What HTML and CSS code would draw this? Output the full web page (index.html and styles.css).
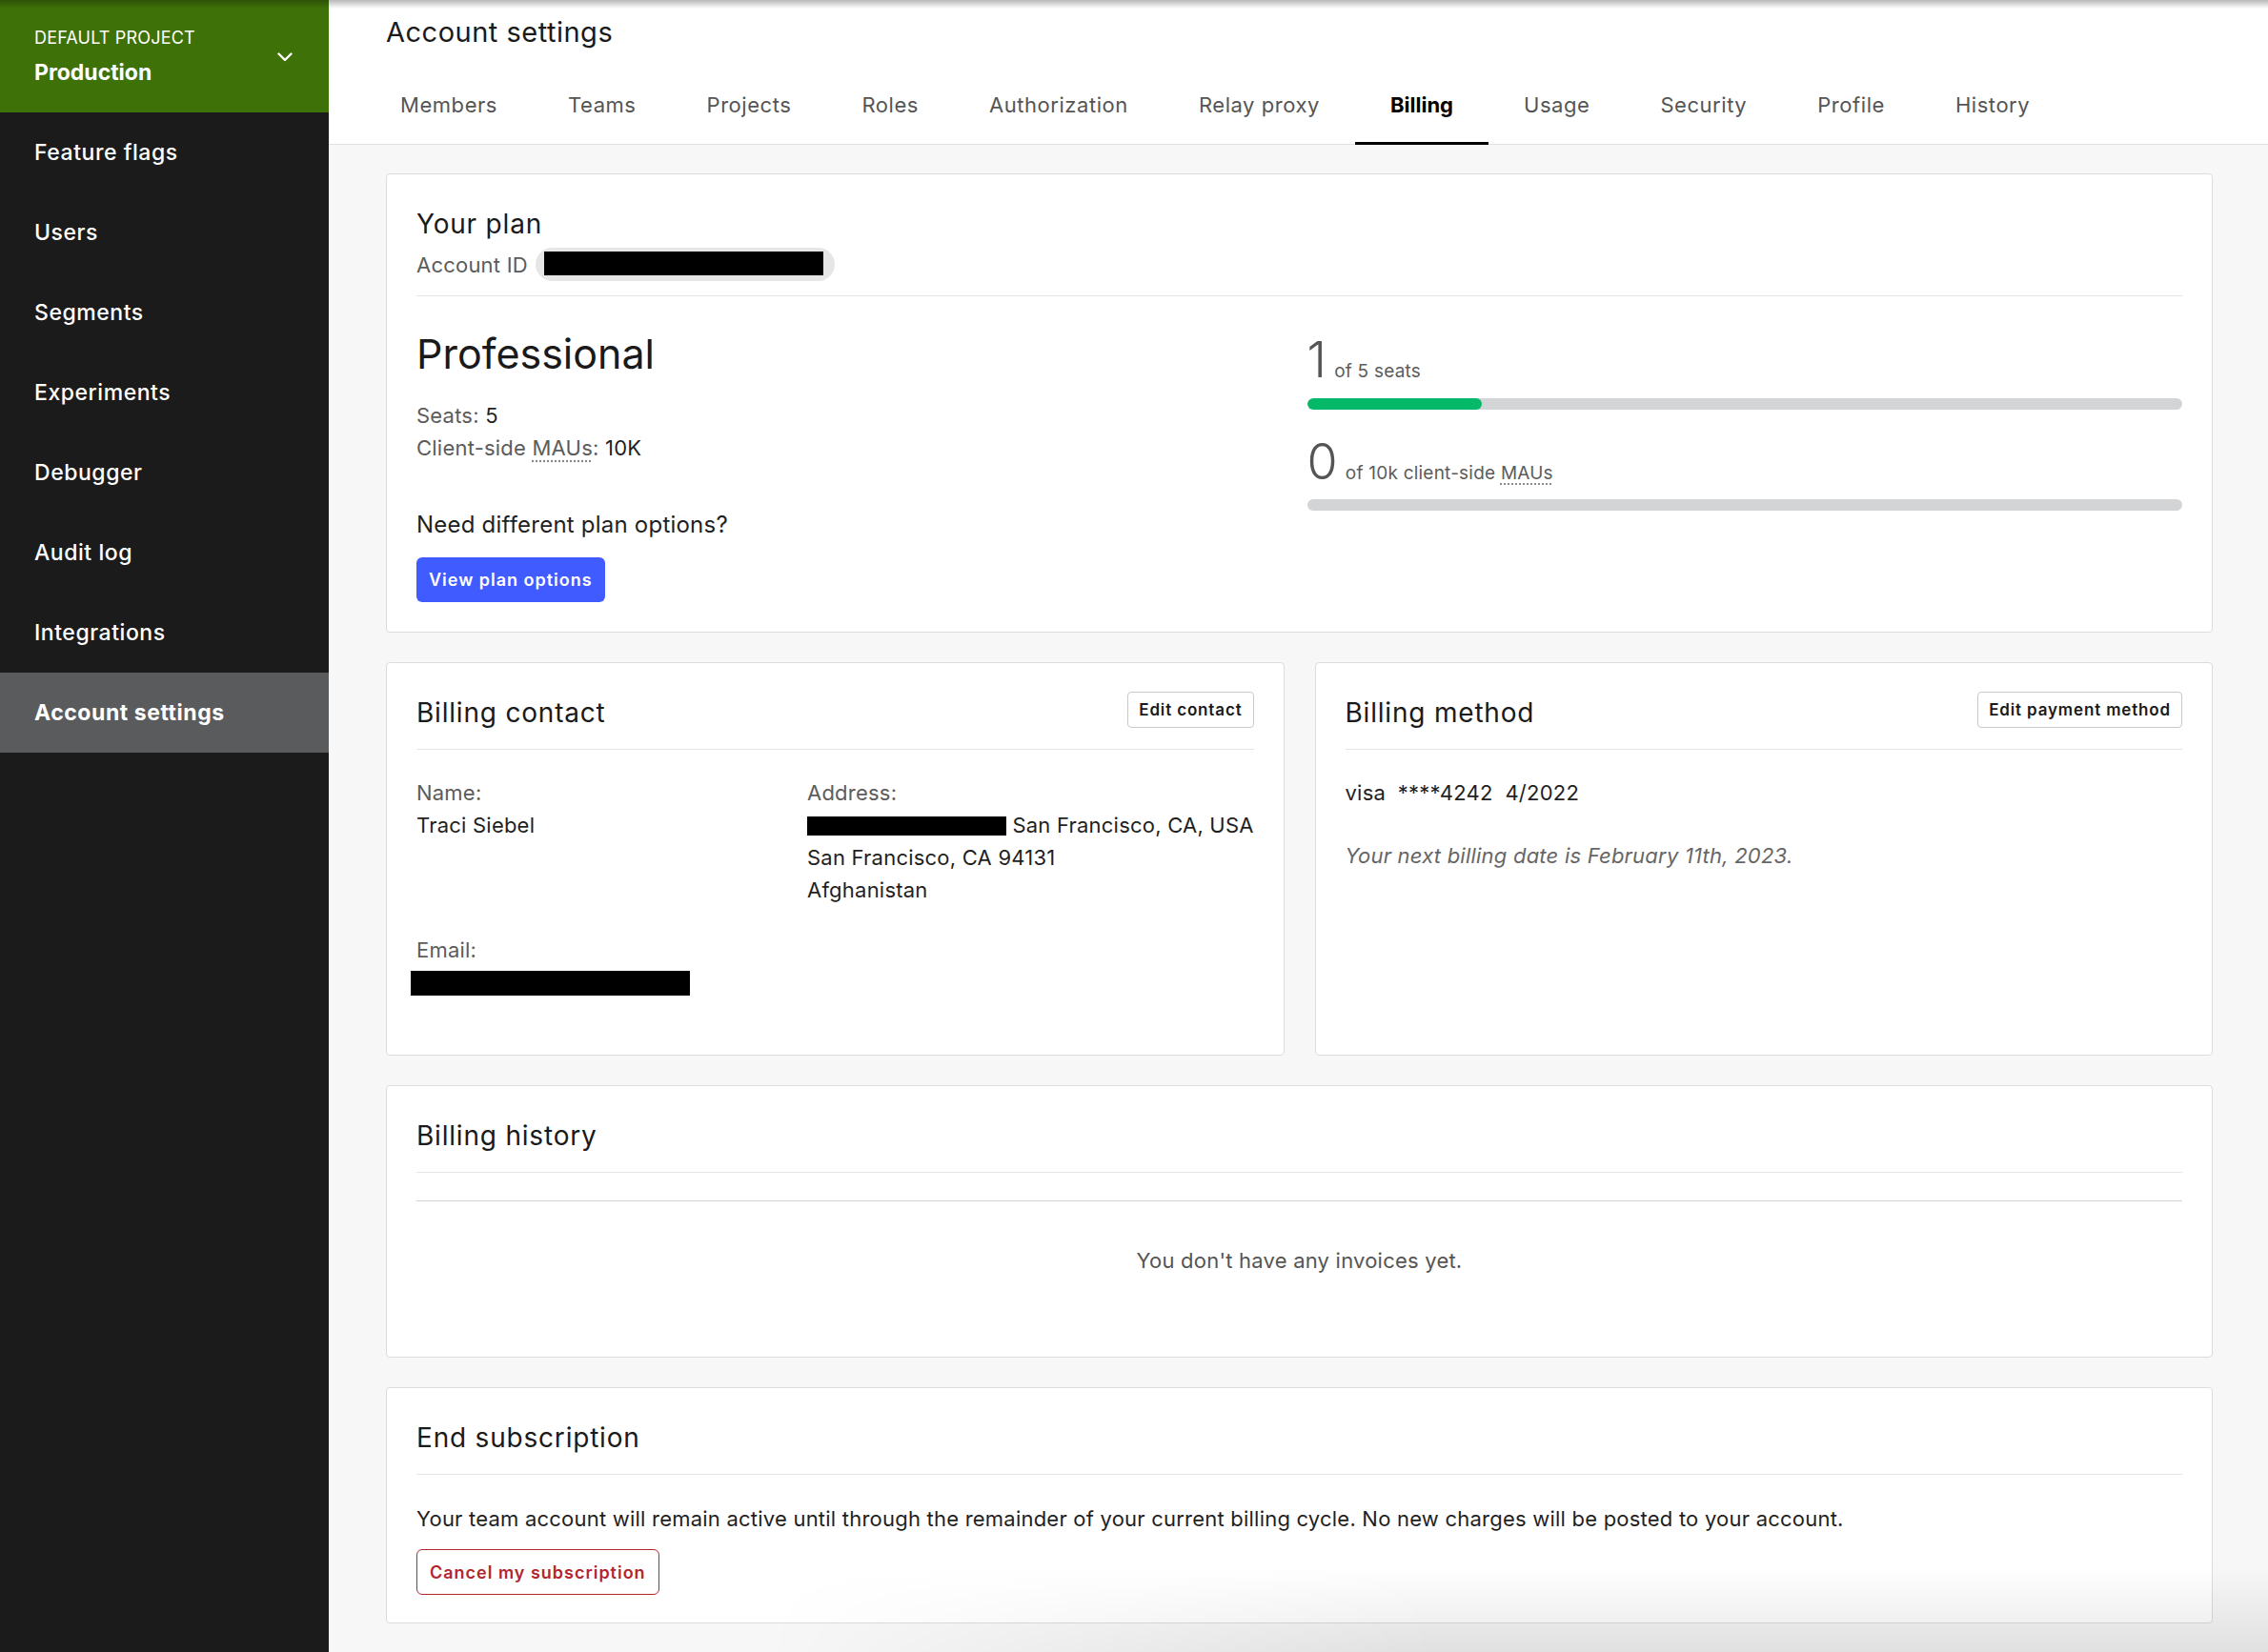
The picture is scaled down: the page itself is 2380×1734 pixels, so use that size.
FILE: index.html
```html
<!DOCTYPE html>
<html lang="en">
<head>
<meta charset="utf-8">
<title>Account settings – Billing</title>
<link rel="stylesheet" href="styles.css">
</head>
<body>
<div class="app">
  <aside class="sidebar">
    <div class="project">
      <div class="project-text">
        <div class="project-label">DEFAULT PROJECT</div>
        <div class="project-name">Production</div>
      </div>
      <svg class="chevron" width="16" height="10" viewBox="0 0 16 10" aria-hidden="true"><path d="M1.5 1.5 L8 8 L14.5 1.5" fill="none" stroke="#fff" stroke-width="2.4" stroke-linecap="round" stroke-linejoin="round"/></svg>
    </div>
    <nav class="nav">
      <a class="nav-item">Feature flags</a>
      <a class="nav-item">Users</a>
      <a class="nav-item">Segments</a>
      <a class="nav-item">Experiments</a>
      <a class="nav-item">Debugger</a>
      <a class="nav-item">Audit log</a>
      <a class="nav-item">Integrations</a>
      <a class="nav-item is-active">Account settings</a>
    </nav>
  </aside>

  <main class="main">
    <header class="page-header">
      <h1 class="page-title">Account settings</h1>
      <nav class="tabs">
        <a class="tab">Members</a>
        <a class="tab">Teams</a>
        <a class="tab">Projects</a>
        <a class="tab">Roles</a>
        <a class="tab">Authorization</a>
        <a class="tab">Relay proxy</a>
        <a class="tab is-active">Billing</a>
        <a class="tab">Usage</a>
        <a class="tab">Security</a>
        <a class="tab">Profile</a>
        <a class="tab">History</a>
      </nav>
    </header>

    <div class="content">
      <section class="card">
        <div class="card-header plan-header">
          <h2 class="card-title">Your plan</h2>
          <div class="account-id">
            <span class="muted">Account ID</span>
            <span class="pill"><span class="redact redact-id"></span></span>
          </div>
        </div>
        <div class="plan-body">
          <div class="plan-info">
            <h3 class="plan-name">Professional</h3>
            <p class="line"><span class="muted">Seats:</span> 5</p>
            <p class="line"><span class="muted">Client-side <abbr class="abbr">MAUs</abbr>:</span> 10K</p>
            <p class="plan-question">Need different plan options?</p>
            <button class="btn btn-primary">View plan options</button>
          </div>
          <div class="usage">
            <div class="usage-row">
              <span class="usage-num">1</span>
              <span class="usage-text">of 5 seats</span>
            </div>
            <div class="bar"><div class="bar-fill" style="width: 20%"></div></div>
            <div class="usage-row usage-row-second">
              <span class="usage-num">0</span>
              <span class="usage-text">of 10k client-side <abbr class="abbr">MAUs</abbr></span>
            </div>
            <div class="bar bar-second"></div>
          </div>
        </div>
      </section>

      <div class="card-pair">
        <section class="card">
          <div class="card-header">
            <h2 class="card-title">Billing contact</h2>
            <button class="btn btn-small">Edit contact</button>
          </div>
          <div class="card-body contact-body">
            <div class="field">
              <div class="muted">Name:</div>
              <div>Traci Siebel</div>
            </div>
            <div class="field">
              <div class="muted">Address:</div>
              <div><span class="redact redact-street"></span> San Francisco, CA, USA</div>
              <div>San Francisco, CA 94131</div>
              <div>Afghanistan</div>
            </div>
            <div class="field">
              <div class="muted">Email:</div>
              <div><span class="redact redact-email"></span></div>
            </div>
          </div>
        </section>

        <section class="card">
          <div class="card-header">
            <h2 class="card-title">Billing method</h2>
            <button class="btn btn-small">Edit payment method</button>
          </div>
          <div class="card-body method-body">
            <p class="line">visa&nbsp;&nbsp;****4242&nbsp;&nbsp;4/2022</p>
            <p class="next-date">Your next billing date is February 11th, 2023.</p>
          </div>
        </section>
      </div>

      <section class="card">
        <div class="card-header">
          <h2 class="card-title">Billing history</h2>
        </div>
        <div class="table-head"></div>
        <p class="empty">You don't have any invoices yet.</p>
      </section>

      <section class="card">
        <div class="card-header">
          <h2 class="card-title">End subscription</h2>
        </div>
        <div class="card-body end-body">
          <p class="line">Your team account will remain active until through the remainder of your current billing cycle. No new charges will be posted to your account.</p>
          <button class="btn btn-danger">Cancel my subscription</button>
        </div>
      </section>
    </div>
  </main>
</div>
</body>
</html>
```

FILE: styles.css
```css
* { box-sizing: border-box; }

html, body {
  margin: 0;
  padding: 0;
}

body {
  font-family: Inter, "Noto Sans", "Liberation Sans", sans-serif;
  font-size: 22px;
  letter-spacing: 0.22px;
  color: #1f1f1f;
  background: #f7f7f7;
}

body::before {
  content: "";
  position: fixed;
  top: 0;
  left: 0;
  right: 0;
  height: 9px;
  background: linear-gradient(to bottom, rgba(0,0,0,0.28), rgba(0,0,0,0));
  pointer-events: none;
  z-index: 10;
}

body::after {
  content: "";
  position: fixed;
  left: 800px;
  right: 0;
  bottom: 0;
  height: 90px;
  background: linear-gradient(to bottom, rgba(0,0,0,0), rgba(0,0,0,0.09));
  -webkit-mask-image: linear-gradient(to right, transparent, #000 45%);
  mask-image: linear-gradient(to right, transparent, #000 45%);
  pointer-events: none;
  z-index: 10;
}

.app {
  display: flex;
  min-height: 100vh;
}

/* Sidebar */
.sidebar {
  width: 345px;
  flex-shrink: 0;
  background: #1b1b1b;
  color: #fff;
}

.project {
  height: 118px;
  background: #3f7109;
  display: flex;
  align-items: center;
  justify-content: space-between;
  padding: 0 38px 0 36px;
}

.project-text {
  display: flex;
  flex-direction: column;
  gap: 11px;
}

.project-label {
  font-size: 18px;
  line-height: 22px;
  letter-spacing: 0.01em;
}

.project-name {
  font-size: 23px;
  line-height: 28px;
  font-weight: 700;
  letter-spacing: 0;
}

.chevron {
  margin-top: 2px;
}

.nav {
  display: flex;
  flex-direction: column;
}

.nav-item {
  height: 84px;
  display: flex;
  align-items: center;
  padding-left: 36px;
  font-size: 23px;
  font-weight: 500;
  letter-spacing: 0.55px;
  color: #fff;
}

.nav-item.is-active {
  background: #5a5b5d;
  font-weight: 700;
}

/* Main */
.main {
  flex: 1;
  min-width: 0;
  background: #f7f7f7;
}

.page-header {
  background: #fff;
  border-bottom: 1px solid #e1e1e1;
  padding: 17px 0 0 60px;
}

.page-title {
  margin: 0;
  font-size: 29px;
  font-weight: 400;
  letter-spacing: 0.5px;
  color: #1a1a1a;
  line-height: 33px;
}

.tabs {
  display: flex;
  margin: 21px 0 -1px -22px;
}

.tab {
  padding: 22px 37px 22px;
  line-height: 34px;
  font-size: 22px;
  letter-spacing: 0.55px;
  color: #555;
  border-bottom: 3px solid transparent;
}

.tab.is-active {
  color: #000;
  font-weight: 700;
  letter-spacing: 0;
  border-bottom-color: #000;
}

.content {
  padding: 30px 58px 27px 60px;
  display: flex;
  flex-direction: column;
  gap: 31px;
}

.card {
  background: #fff;
  border: 1px solid #dcdcdc;
  border-radius: 4px;
  padding: 0 31px;
}

.card-header {
  display: flex;
  align-items: center;
  justify-content: space-between;
  padding: 35px 0 21px;
  border-bottom: 1px solid #e4e4e4;
}

.card-title {
  margin: 0;
  font-size: 28px;
  font-weight: 400;
  letter-spacing: 0.8px;
  color: #1a1a1a;
  line-height: 34px;
}

.plan-header {
  display: block;
  padding-bottom: 15px;
}

.account-id {
  display: flex;
  align-items: center;
  gap: 8px;
  margin-top: 8px;
  font-size: 22px;
}

.muted {
  color: #5c5c5c;
}

.pill {
  display: inline-flex;
  background: #e6e6e6;
  border-radius: 18px;
  padding: 4px 12px 6px 9px;
}

.redact {
  display: inline-block;
  background: #000;
  vertical-align: middle;
}

.redact-id {
  width: 293px;
  height: 25px;
}

.redact-street {
  width: 209px;
  height: 20px;
  vertical-align: -3px;
}

.redact-email {
  width: 293px;
  height: 26px;
  margin-left: -6px;
  vertical-align: -6px;
}

.abbr {
  text-decoration: underline dotted #888;
  text-underline-offset: 5px;
}

.plan-body {
  display: grid;
  grid-template-columns: 1fr 1fr;
  column-gap: 16px;
  padding: 34px 0 31px;
}

.plan-name {
  margin: 0 0 21px;
  font-size: 43px;
  font-weight: 400;
  letter-spacing: 0;
  line-height: 53px;
  color: #1a1a1a;
}

.line {
  margin: 0;
  line-height: 34px;
}

.plan-question {
  margin: 47px 0 0;
  font-size: 24px;
  line-height: 34px;
}

.btn {
  font-family: inherit;
  cursor: pointer;
  background: #fff;
  border-radius: 6px;
}

.btn-primary {
  margin-top: 17px;
  height: 47px;
  padding: 0 13px;
  border: none;
  background: #405bff;
  color: #fff;
  font-size: 18px;
  font-weight: 600;
  letter-spacing: 0.055em;
}

.btn-small {
  height: 38px;
  padding: 0 11px;
  border: 1px solid #c9c9c9;
  border-radius: 4px;
  font-size: 17px;
  font-weight: 600;
  color: #1a1a1a;
  letter-spacing: 0.05em;
  margin-top: -6px;
}

.btn-danger {
  margin-top: 15px;
  height: 48px;
  padding: 0 13px;
  border: 1px solid #b3262e;
  color: #b3262e;
  font-size: 18px;
  font-weight: 600;
  letter-spacing: 0.055em;
}

.usage {
  padding-top: 7px;
}

.usage-row {
  display: flex;
  align-items: baseline;
  gap: 8px;
  height: 52px;
  line-height: 1;
}

.usage-row-second {
  margin-top: 29px;
}

.usage-num {
  font-size: 52px;
  line-height: 52px;
  font-weight: 300;
  color: #555;
}

.usage-text {
  font-size: 19px;
  color: #5c5c5c;
}

.bar {
  margin-top: 14px;
  height: 12px;
  border-radius: 6px;
  background: #d3d4d6;
  overflow: hidden;
}

.bar-second {
  margin-top: 13px;
}

.bar-fill {
  height: 100%;
  background: #06b96a;
  border-radius: 6px;
}

.card-pair {
  display: grid;
  grid-template-columns: 1fr 1fr;
  gap: 32px;
}

.card-body {
  padding: 28px 0 32px;
}

.contact-body {
  display: grid;
  grid-template-columns: 410px 1fr;
  row-gap: 29px;
  padding-bottom: 59px;
  line-height: 34px;
}

.field {
  white-space: nowrap;
  min-width: 0;
}

.next-date {
  margin: 32px 0 0;
  line-height: 34px;
  font-style: italic;
  color: #666;
}

.table-head {
  height: 30px;
  border-bottom: 1px solid #d2d2d2;
}

.empty {
  margin: 0;
  padding: 45px 0 84px;
  text-align: center;
  line-height: 34px;
  color: #555;
}

.end-body {
  padding: 29px 0 29px;
}
```
